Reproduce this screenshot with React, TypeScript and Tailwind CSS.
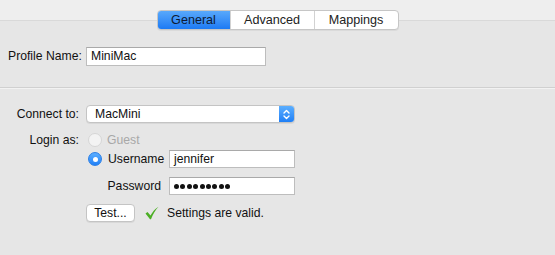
import React from "react";

const font = { fontFamily: '"Liberation Sans", Arial, Helvetica, sans-serif' };

function Radio({ selected, disabled }: { selected?: boolean; disabled?: boolean }) {
  if (selected) {
    return (
      <div className="w-[14px] h-[14px] rounded-full bg-gradient-to-b from-[#5aaeff] to-[#1f80f7] border border-[#2a7fe6] flex items-center justify-center shrink-0">
        <div className="w-[5px] h-[5px] rounded-full bg-white" />
      </div>
    );
  }
  return (
    <div
      className={
        "w-[14px] h-[14px] rounded-full border shrink-0 " +
        (disabled ? "bg-[#f3f3f3] border-[#d6d6d6]" : "bg-white border-[#b8b8b8]")
      }
    />
  );
}

export default function App() {
  const tabs = [
    { label: "General", w: "w-[72px]", active: true },
    { label: "Advanced", w: "w-[84px]" },
    { label: "Mappings", w: "w-[84px]" },
  ];
  return (
    <div className="w-[555px] h-[255px] bg-[#e6e6e6] text-[12.2px] text-[#111] overflow-hidden whitespace-nowrap" style={font}>
      <div className="h-[21px] bg-[#eeeeee] border-b border-[#d9d9d9]" />
      <div className="-mt-[11px] flex justify-center">
        <div className="flex h-[20px] rounded-[4px] border border-[#c6c6c6] bg-white shadow-[0_1px_0_rgba(0,0,0,0.05)] overflow-hidden">
          {tabs.map((t, i) => (
            <div
              key={t.label}
              className={
                t.w +
                " flex items-center justify-center leading-none text-[12.6px] " +
                (i > 0 ? "border-l border-[#d2d2d2] " : "") +
                (t.active ? "bg-gradient-to-b from-[#58a8fb] to-[#1b7af4] text-[#0d1a33]" : "text-[#222]")
              }
            >
              {t.label}
            </div>
          ))}
        </div>
      </div>

      <div className="mt-[17px] flex items-center h-[19px]">
        <div className="w-[86px] pl-[8px]">Profile Name:</div>
        <div className="w-[180px] h-[19px] bg-white border border-[#bdbdbd] border-t-[#a9a9a9] flex items-center pl-[4px]">
          MiniMac
        </div>
      </div>

      <div className="mt-[21px] h-px bg-[#d0d0d0]" />
      <div className="h-px bg-[#f2f2f2]" />

      <div className="mt-[16px] flex items-center h-[18px]">
        <div className="w-[86px] pr-[7px] text-right">Connect to:</div>
        <div className="w-[209px] h-[18px] bg-white rounded-[4px] border border-[#c4c4c4] shadow-[0_1px_0_rgba(0,0,0,0.06)] flex items-center overflow-hidden">
          <div className="flex-1 pl-[8px]">MacMini</div>
          <div className="w-[15px] h-full bg-gradient-to-b from-[#5aaeff] to-[#1f7ff5] flex items-center justify-center">
            <svg width="7" height="11" viewBox="0 0 7 11" fill="none" stroke="white" strokeWidth="1.4" strokeLinecap="round" strokeLinejoin="round">
              <path d="M1 4 L3.5 1.5 L6 4" />
              <path d="M1 7 L3.5 9.5 L6 7" />
            </svg>
          </div>
        </div>
      </div>

      <div className="mt-[8px] flex items-center h-[18px]">
        <div className="w-[86px] pr-[7px] text-right">Login as:</div>
        <div className="flex items-center pl-[2px]">
          <Radio disabled />
          <span className="ml-[5px] text-[#a8a8a8]">Guest</span>
        </div>
      </div>

      <div className="mt-[1px] flex items-center h-[18px]">
        <div className="w-[86px]" />
        <div className="flex items-center pl-[2px]">
          <Radio selected />
          <span className="ml-[6px] w-[61px]">Username</span>
        </div>
        <div className="w-[126px] h-[18px] bg-white border border-[#bdbdbd] border-t-[#a9a9a9] flex items-center pl-[4px]">
          jennifer
        </div>
      </div>

      <div className="mt-[9px] flex items-center h-[18px]">
        <div className="w-[169px] pr-[8px] text-right">Password</div>
        <div className="w-[126px] h-[18px] bg-white border border-[#bdbdbd] border-t-[#a9a9a9] flex items-center pl-[4px] gap-[1.4px]">
          {Array.from({ length: 9 }).map((_, i) => (
            <div key={i} className="w-[5px] h-[5px] rounded-full bg-[#111]" />
          ))}
        </div>
      </div>

      <div className="mt-[9px] flex items-center h-[18px]">
        <div className="w-[86px]" />
        <div className="w-[49px] h-[18px] bg-white rounded-[4px] border border-[#c4c4c4] shadow-[0_1px_0_rgba(0,0,0,0.06)] flex items-center justify-center">
          Test...
        </div>
        <svg className="ml-[10px]" width="14" height="14" viewBox="0 0 14 14">
          <path d="M0.5 7.5 L2.5 6 L5.5 9.5 C7.5 6 10 3 13.5 0.8 C10.5 4 8 8 6 13.2 L5 13.2 Z" fill="#4caf25" />
        </svg>
        <span className="ml-[8px]">Settings are valid.</span>
      </div>
    </div>
  );
}
